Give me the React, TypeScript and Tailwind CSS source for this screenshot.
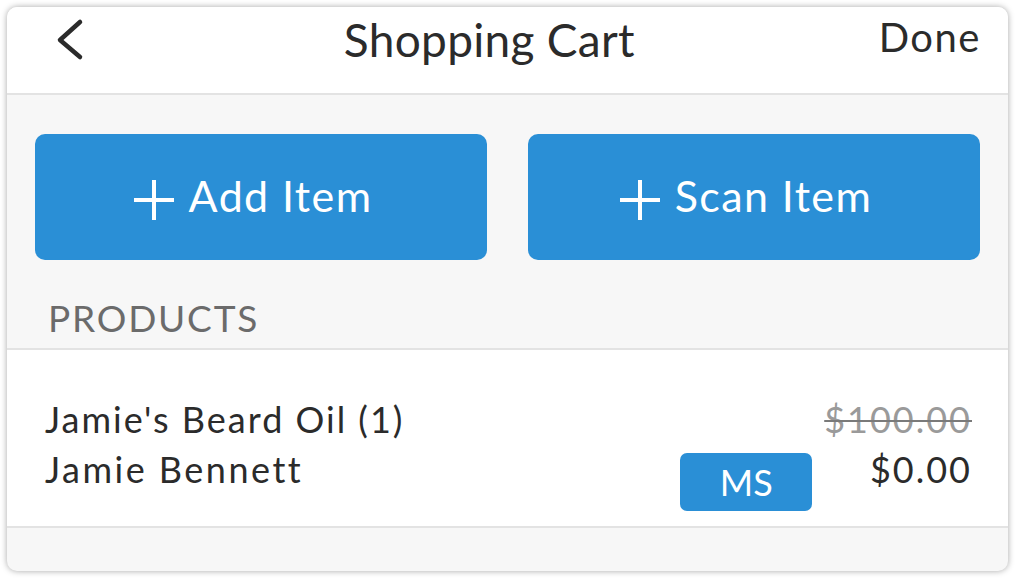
function ActionButton({ label }: { label: string }) {
  return (
    <button className="flex-1 h-[126px] rounded-[10px] bg-[#2a8fd6] text-white flex items-center justify-center gap-[15px] pb-[4px] pr-[16px]">
      <svg width="40" height="40" viewBox="0 0 40 40" className="mt-[10px]">
        <path d="M20 0v40M0 20h40" stroke="white" strokeWidth="4" />
      </svg>
      <span className="text-[43px] leading-[43px] tracking-[1.4px]">{label}</span>
    </button>
  )
}

export default function App() {
  return (
    <div className="w-[1015px] h-[579px] bg-white p-[7px] font-['Lato',sans-serif]">
      <div className="h-[564px] rounded-[10px] overflow-hidden bg-[#f7f7f7] shadow-[0_0_6px_rgba(0,0,0,0.35)] flex flex-col">
        {/* header */}
        <div className="h-[88px] shrink-0 bg-white border-b-2 border-[#e3e3e3] flex items-start pt-[10px] px-[27px] text-[#2b2b2b]">
          <svg width="40" height="48" viewBox="0 0 40 48" className="ml-[16px]">
            <path d="M30 5 L10 23 L30 40" fill="none" stroke="#2b2b2b" strokeWidth="4.5" strokeLinecap="round" strokeLinejoin="round" />
          </svg>
          <div className="flex-1 text-center text-[46px] leading-[46px] tracking-[0.3px] pl-[10px]">Shopping Cart</div>
          <div className="text-[40px] leading-[40px] tracking-[1.5px]">Done</div>
        </div>

        {/* actions */}
        <div className="flex gap-[41px] px-[28px] pt-[39px]">
          <ActionButton label="Add Item" />
          <ActionButton label="Scan Item" />
        </div>

        <div className="px-[41px] pt-[39px] pb-[12px] text-[37px] leading-[37px] text-[#6b6b6b] tracking-[1.8px] border-b-2 border-[#e3e3e3]">
          PRODUCTS
        </div>

        {/* product row */}
        <div className="h-[178px] shrink-0 bg-white border-b-2 border-[#e3e3e3] flex justify-between pl-[38px] pr-[36px] pt-[44px]">
          <div className="text-[#2b2b2b] text-[36px] leading-[50px]">
            <div className="tracking-[2px]">Jamie's Beard Oil (1)</div>
            <div className="tracking-[2.5px]">Jamie Bennett</div>
          </div>
          <div className="flex items-start gap-[12px]">
            <div className="mt-[59px] w-[132px] h-[58px] rounded-[7px] bg-[#2a8fd6] text-white text-[36px] leading-[36px] flex items-center justify-center">
              MS
            </div>
            <div className="text-right text-[36px] leading-[50px] tracking-[2px]">
              <div className="text-[#9a9a9a] line-through decoration-[#7a7a7a] decoration-2">$100.00</div>
              <div className="text-[#2b2b2b]">$0.00</div>
            </div>
          </div>
        </div>
      </div>
    </div>
  )
}
